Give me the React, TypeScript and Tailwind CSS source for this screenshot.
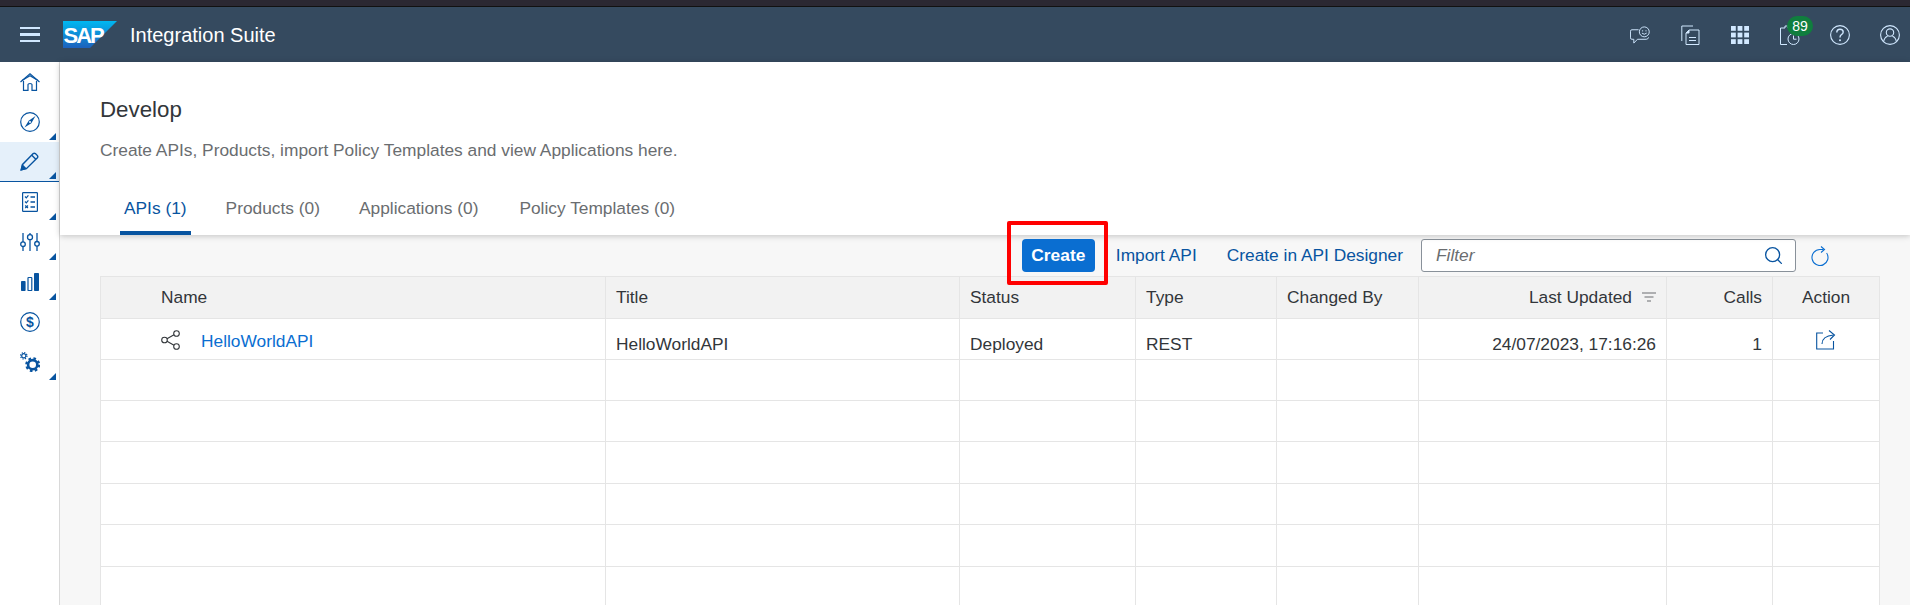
import React from "react";
import { Search } from "lucide-react";

const SideTriangle = () => (
  <span className="absolute right-[3px] bottom-[2px] w-0 h-0 border-l-[7px] border-l-transparent border-b-[7px] border-b-[#0854a0]" />
);

const HomeIcon = () => (
  <svg width="20" height="18" viewBox="0 0 20 18" fill="none" stroke="#0854a0" strokeWidth="1.2">
    <path d="M0.5 9 L10 0.8 L19.5 9" />
    <path d="M2 7.5 L10 2.8 L18 7.5" />
    <path d="M3.5 8 V17.3 H8 V11.5 Q8 10.5 10 10.5 Q12 10.5 12 11.5 V17.3 H16.5 V8" />
  </svg>
);

const CompassIcon = () => (
  <svg width="20" height="20" viewBox="0 0 20 20" fill="none" stroke="#0854a0" strokeWidth="1.2">
    <circle cx="10" cy="10" r="9.3" />
    <path d="M15.5 4 L11.3 11.3 L4.5 15.5 L8.7 8.7 Z" fill="#0854a0" stroke="none" />
    <circle cx="10" cy="10" r="1" fill="#fff" stroke="none" />
  </svg>
);

const PencilIcon = () => (
  <svg width="19" height="19" viewBox="0 0 19 19" fill="none" stroke="#0854a0" strokeWidth="1.4">
    <path d="M1.3 17.7 L2.6 12.4 L13.2 1.6 Q14.2 0.8 15.4 1.6 L17.4 3.6 Q18.2 4.8 17.4 5.8 L6.6 16.4 Z" />
    <path d="M1.3 17.7 L2.4 13.2 L5.8 16.6 Z" fill="#0854a0" />
    <path d="M11.8 3.2 L15.8 7.2" />
  </svg>
);

const ListIcon = () => (
  <svg width="16" height="20" viewBox="0 0 16 20" fill="none" stroke="#0854a0" strokeWidth="1.2">
    <rect x="0.6" y="0.6" width="14.8" height="18.8" rx="0.6" />
    <path d="M3 4.5 L4.3 5.8 L6.4 3.3 M3 9.5 L4.3 10.8 L6.4 8.3 M3.2 13.5 L6 16 M6 13.5 L3.2 16" />
    <path d="M8.5 5 H13 M8.5 10 H13 M8.5 15 H13" strokeWidth="1.4" />
  </svg>
);

const SlidersIcon = () => (
  <svg width="20" height="18" viewBox="0 0 20 18" fill="none" stroke="#0854a0" strokeWidth="1.3">
    <path d="M3 0 V9 M3 13.5 V18 M10 0 V1.5 M10 7 V18 M17 0 V8 M17 13 V18" />
    <circle cx="3" cy="11.2" r="2.3" />
    <circle cx="10" cy="4.2" r="2.5" />
    <circle cx="17" cy="10.8" r="2.3" />
  </svg>
);

const ChartIcon = () => (
  <svg width="18" height="18" viewBox="0 0 18 18" fill="none" stroke="#0854a0">
    <rect x="0" y="8" width="4.6" height="10" rx="0.8" fill="#0854a0" stroke="none" />
    <rect x="7" y="4.5" width="3.8" height="13" rx="0.6" strokeWidth="1.2" />
    <rect x="13" y="0" width="5" height="18" rx="0.8" fill="#0854a0" stroke="none" />
  </svg>
);

const DollarIcon = () => (
  <svg width="20" height="20" viewBox="0 0 20 20" fill="none" stroke="#0854a0" strokeWidth="1.2">
    <circle cx="10" cy="10" r="9.3" />
    <text x="10" y="15" textAnchor="middle" fontSize="14" fontWeight="700" fontFamily="Liberation Sans" fill="#0854a0" stroke="none">$</text>
  </svg>
);

const GearIcon = () => (
  <svg width="20" height="20" viewBox="0 0 20 20" fill="none" stroke="#0854a0">
    <circle cx="12.7" cy="12.7" r="4.6" strokeWidth="2.6" />
    <circle cx="12.7" cy="12.7" r="6.4" strokeWidth="2.2" strokeDasharray="2.6 2.42" />
    <circle cx="3.8" cy="3.8" r="2.1" strokeWidth="1.2" />
    <circle cx="3.8" cy="3.8" r="3.2" strokeWidth="1.2" strokeDasharray="1.3 1.2" />
  </svg>
);

const FeedbackIcon = () => (
  <svg width="21" height="18" viewBox="0 0 21 18" fill="none" stroke="#d1e8ff" strokeWidth="1">
    <path d="M9 3.5 H2 Q0.5 3.5 0.5 5 V12 Q0.5 13.5 2 13.5 H4 V17.5 L7.8 13.5 H17 Q19 13.5 19.5 11.5" />
    <circle cx="15" cy="5.7" r="5.2" />
    <circle cx="13.2" cy="4.6" r="0.7" fill="#d1e8ff" stroke="none" />
    <circle cx="16.8" cy="4.6" r="0.7" fill="#d1e8ff" stroke="none" />
    <path d="M12.5 7 Q15 9.4 17.5 7" />
  </svg>
);

const DocsIcon = () => (
  <svg width="19" height="20" viewBox="0 0 19 20" fill="none" stroke="#d1e8ff" strokeWidth="1">
    <path d="M12 1 H0.8 V16" />
    <path d="M8 5 H18 V19.5 H5 V8 Z" />
    <path d="M5 8 H8 V5" fill="#d1e8ff" />
    <path d="M8 12.5 H15 M8 15.5 H15" />
  </svg>
);

const GridIcon = () => (
  <svg width="18" height="18" viewBox="0 0 18 18" fill="#d1e8ff">
    <rect x="0" y="0" width="4.8" height="4.8" />
    <rect x="6.6" y="0" width="4.8" height="4.8" />
    <rect x="13.2" y="0" width="4.8" height="4.8" />
    <rect x="0" y="6.6" width="4.8" height="4.8" />
    <rect x="6.6" y="6.6" width="4.8" height="4.8" />
    <rect x="13.2" y="6.6" width="4.8" height="4.8" />
    <rect x="0" y="13.2" width="4.8" height="4.8" />
    <rect x="6.6" y="13.2" width="4.8" height="4.8" />
    <rect x="13.2" y="13.2" width="4.8" height="4.8" />
  </svg>
);

const ClipClockIcon = () => (
  <svg width="20" height="20" viewBox="0 0 20 20" fill="none" stroke="#d1e8ff" strokeWidth="1">
    <path d="M7 19.5 H0.5 V3 H5" />
    <path d="M5 3 V1 H8 V3" />
    <circle cx="13.5" cy="14" r="5.5" />
    <path d="M13.5 10.5 V14.2 H16.5" />
  </svg>
);

const HelpIcon = () => (
  <svg width="20" height="20" viewBox="0 0 20 20" fill="none" stroke="#d1e8ff" strokeWidth="1.1">
    <circle cx="10" cy="10" r="9.4" />
    <path d="M6.8 7.4 Q6.8 4.2 10 4.2 Q13.2 4.2 13.2 7 Q13.2 8.6 11.4 9.7 Q10 10.5 10 12.6" strokeWidth="1.4" />
    <circle cx="10" cy="15.3" r="1" fill="#d1e8ff" stroke="none" />
  </svg>
);

const UserIcon = () => (
  <svg width="20" height="20" viewBox="0 0 20 20" fill="none" stroke="#d1e8ff" strokeWidth="1.1">
    <circle cx="10" cy="10" r="9.4" />
    <circle cx="10" cy="7.6" r="3.7" />
    <path d="M3.6 16.8 Q4.2 12.4 7.6 11.2 M16.4 16.8 Q15.8 12.4 12.4 11.2" />
  </svg>
);

const ShareNodes = () => (
  <svg width="20" height="20" viewBox="0 0 20 20" fill="none" stroke="#32363a" strokeWidth="1.1">
    <circle cx="3.5" cy="10" r="2.8" />
    <circle cx="15.5" cy="3.5" r="2.8" />
    <circle cx="15.5" cy="16.5" r="2.8" />
    <path d="M6 8.7 L13 4.8 M6 11.3 L13 15.2" />
  </svg>
);

const SapLogo = () => (
  <svg width="54" height="27" viewBox="0 0 54 27">
    <defs>
      <linearGradient id="sapBlue" x1="0" y1="0" x2="0" y2="1">
        <stop offset="0" stopColor="#00b8f1" />
        <stop offset="1" stopColor="#1d61bc" />
      </linearGradient>
    </defs>
    <polygon points="0,0 54,0 27,27 0,27" fill="url(#sapBlue)" />
    <text x="0.5" y="22" fontSize="22" fontWeight="700" fontFamily="Liberation Sans" fill="#fff" letterSpacing="-2">SAP</text>
  </svg>
);

const sideItems = [
  { icon: <HomeIcon />, tri: false },
  { icon: <CompassIcon />, tri: true },
  { icon: <PencilIcon />, tri: true, active: true },
  { icon: <ListIcon />, tri: true },
  { icon: <SlidersIcon />, tri: true },
  { icon: <ChartIcon />, tri: true },
  { icon: <DollarIcon />, tri: false },
  { icon: <GearIcon />, tri: true },
];

const tabs = ["APIs (1)", "Products (0)", "Applications (0)", "Policy Templates (0)"];

const emptyRows = [0, 1, 2, 3, 4, 5];

const thClass = "border border-[#e5e5e5] font-normal px-[10px] h-[42px] text-[17.33px] text-[#32363a]";
const tdClass = "border border-[#e5e5e5] px-[10px] pt-[9px] h-[41.4px] text-[17.33px] leading-[24px] text-[#32363a]";
const firstRowTd = "border border-[#e5e5e5] px-[10px] pt-[10px] h-[40.6px] text-[17.33px] leading-[24px] text-[#32363a]";

const App = () => {
  return (
    <div className="w-[1910px] h-[605px] overflow-hidden flex flex-col bg-white font-['Liberation_Sans',Arial,sans-serif] text-[#32363a]">
      <div className="h-[7px] shrink-0 bg-[#2b2832] border-b border-[#111]" />

      <header className="h-[55px] shrink-0 bg-[#354a5f] flex items-center justify-between pr-[10px]">
        <div className="flex items-center">
          <div className="w-[20px] ml-[20px] flex flex-col gap-[4px]">
            <span className="h-[2.5px] bg-[#d1e8ff]" />
            <span className="h-[2.5px] bg-[#d1e8ff]" />
            <span className="h-[2.5px] bg-[#d1e8ff]" />
          </div>
          <div className="ml-[23px] flex">
            <SapLogo />
          </div>
          <span className="ml-[13px] text-[20px] text-white">Integration Suite</span>
        </div>
        <div className="flex items-center gap-[30px]">
          <div className="w-[20px] flex justify-center"><FeedbackIcon /></div>
          <div className="w-[20px] flex justify-center"><DocsIcon /></div>
          <div className="w-[20px] flex justify-center"><GridIcon /></div>
          <div className="relative w-[20px] flex justify-center">
            <ClipClockIcon />
            <span className="absolute left-[7px] top-[-9px] w-[26px] h-[20px] rounded-full bg-[#107e3e] text-white text-[14px] leading-[20px] text-center">
              89
            </span>
          </div>
          <div className="w-[20px] flex justify-center"><HelpIcon /></div>
          <div className="w-[20px] flex justify-center"><UserIcon /></div>
        </div>
      </header>

      <div className="flex-1 flex min-h-0">
        <aside className="w-[60px] shrink-0 border-r border-[#d9d9d9] bg-white">
          {sideItems.map((item, i) => (
            <div
              key={i}
              className={
                item.active
                  ? "relative h-[40px] flex items-center justify-center bg-[#e5f0fa] border-b-[1.5px] border-[#0854a0]"
                  : "relative h-[40px] flex items-center justify-center"
              }
            >
              {item.icon}
              {item.tri && <SideTriangle />}
            </div>
          ))}
        </aside>

        <main className="flex-1 min-w-0 flex flex-col bg-[#f7f7f7]">
          <section className="relative h-[173px] shrink-0 bg-white pl-[40px] pt-[34px] flex flex-col shadow-[0_1px_6px_rgba(0,0,0,0.22)]">
            <h1 className="text-[22.3px] leading-[28px] font-normal text-[#32363a]">Develop</h1>
            <p className="mt-[13px] text-[17.33px] leading-[26px] text-[#6a6d70]">
              Create APIs, Products, import Policy Templates and view Applications here.
            </p>
            <nav className="mt-auto ml-[20px] flex gap-[31px]">
              {tabs.map((t, i) => (
                <div
                  key={t}
                  className={
                    i === 0
                      ? "px-[4px] h-[46px] pt-[7px] text-[17.33px] leading-[24px] text-[#0854a0] border-b-[4px] border-[#0854a0]"
                      : i === 3
                        ? "ml-[2px] px-[4px] h-[46px] pt-[7px] text-[17.33px] leading-[24px] text-[#6a6d70]"
                        : "px-[4px] h-[46px] pt-[7px] text-[17.33px] leading-[24px] text-[#6a6d70]"
                  }
                >
                  {t}
                </div>
              ))}
            </nav>
          </section>

          <div className="h-[41px] shrink-0 flex items-center justify-end pr-[81px] text-[17.33px] text-[#0854a0]">
            <div className="relative">
              <button className="w-[73px] h-[33px] rounded-[4px] bg-[#0a6ed1] text-white font-bold text-[17.33px]">
                Create
              </button>
              <span className="absolute left-[-15px] top-[-18px] w-[101px] h-[64px] border-[4px] border-[#f00] rounded-[2px]" />
            </div>
            <span className="ml-[21px]">Import API</span>
            <span className="ml-[30px]">Create in API Designer</span>
            <div className="ml-[18px] w-[375px] h-[33px] bg-white border border-[#89919a] rounded-[3px] flex items-center justify-between pl-[14px] pr-[11px]">
              <span className="italic text-[#6a6d70]">Filter</span>
              <Search size={21} strokeWidth={1.5} color="#0854a0" />
            </div>
            <svg className="ml-[15px]" width="18" height="20" viewBox="0 0 18 20" fill="none" stroke="#0a6ed1" strokeWidth="1.1">
              <path d="M12.5 3.5 H9 A8 8 0 1 0 15.6 7" />
              <path d="M10 0.5 L13.5 3.5 L10 6.5" />
            </svg>
          </div>

          <div className="pl-[40px] pr-[30px]">
            <table className="w-[1779px] table-fixed border-collapse bg-white">
              <colgroup>
                <col className="w-[505px]" />
                <col className="w-[354px]" />
                <col className="w-[176px]" />
                <col className="w-[141px]" />
                <col className="w-[142px]" />
                <col className="w-[248px]" />
                <col className="w-[106px]" />
                <col className="w-[107px]" />
              </colgroup>
              <thead className="bg-[#f2f2f2]">
                <tr>
                  <th className={`${thClass} text-left pl-[60px]`}>Name</th>
                  <th className={`${thClass} text-left`}>Title</th>
                  <th className={`${thClass} text-left`}>Status</th>
                  <th className={`${thClass} text-left`}>Type</th>
                  <th className={`${thClass} text-left`}>Changed By</th>
                  <th className={`${thClass} text-right`}>
                    <span className="inline-flex items-center gap-[10px]">
                      Last Updated
                      <svg width="14" height="10" viewBox="0 0 14 10" fill="none" stroke="#6a6d70" strokeWidth="1">
                        <path d="M0 1 H14 M2.5 5 H11.5 M5 9 H9" />
                      </svg>
                    </span>
                  </th>
                  <th className={`${thClass} text-right`}>Calls</th>
                  <th className={`${thClass} text-center`}>Action</th>
                </tr>
              </thead>
              <tbody>
                <tr>
                  <td className="border border-[#e5e5e5] pl-[60px] pt-[2px] h-[40.6px]">
                    <div className="flex items-center gap-[20px] text-[17.33px]">
                      <ShareNodes />
                      <span className="text-[#0a6ed1] pt-[4px]">HelloWorldAPI</span>
                    </div>
                  </td>
                  <td className={firstRowTd}>HelloWorldAPI</td>
                  <td className={firstRowTd}>Deployed</td>
                  <td className={firstRowTd}>REST</td>
                  <td className={firstRowTd} />
                  <td className={`${firstRowTd} text-right text-[17.7px]`}>24/07/2023, 17:16:26</td>
                  <td className={`${firstRowTd} text-right`}>1</td>
                  <td className="border border-[#e5e5e5] pt-[2px] h-[40.6px]">
                    <svg className="mx-auto" width="20" height="20" viewBox="0 0 20 20" fill="none" stroke="#0854a0" strokeWidth="1.1">
                      <path d="M7 3 H0.7 V19 H17.5 V11" />
                      <path d="M6 14 Q6 6 17.5 5" />
                      <path d="M13 0.5 L18.5 5 L14 9.5" />
                    </svg>
                  </td>
                </tr>
                {emptyRows.map((r) => (
                  <tr key={r}>
                    <td className={tdClass} />
                    <td className={tdClass} />
                    <td className={tdClass} />
                    <td className={tdClass} />
                    <td className={tdClass} />
                    <td className={tdClass} />
                    <td className={tdClass} />
                    <td className={tdClass} />
                  </tr>
                ))}
              </tbody>
            </table>
          </div>
        </main>
      </div>
    </div>
  );
};

export default App;
